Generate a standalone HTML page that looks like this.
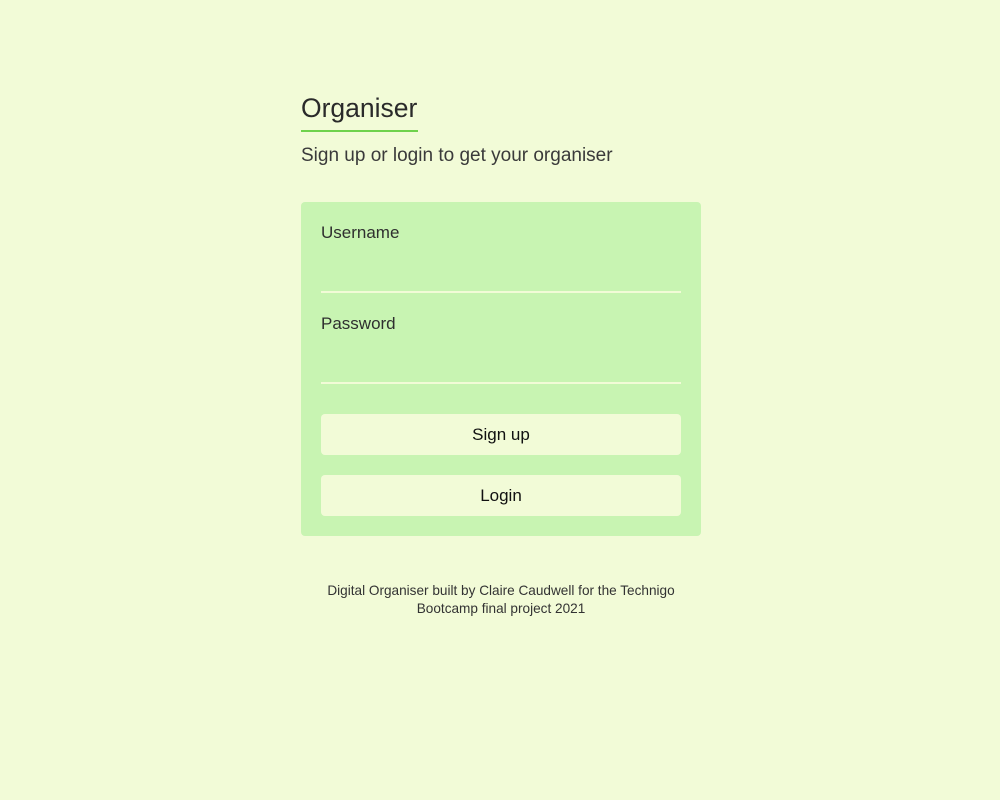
<!DOCTYPE html>
<html><head><style>
html,body{margin:0;padding:0;width:1000px;height:800px;background:#f2fbd7;font-family:"Liberation Sans",sans-serif;color:#2a2a2a}
.t{position:absolute;left:301px;top:93px;font-size:26.5px;line-height:30px;color:#2a2a2a}
.ul{position:absolute;left:301px;top:130px;width:117px;height:2px;background:#6fd24c}
.sub{position:absolute;left:301px;top:145px;font-size:19px;line-height:22px;color:#3a3a3a}
.card{position:absolute;left:301px;top:202px;width:400px;height:334px;background:#c8f4b2;border-radius:4px}
.lab{position:absolute;left:20px;font-size:17px;color:#2f2f2f}
.line{position:absolute;left:20px;width:360px;height:2px;background:#f2fbd7}
.btn{position:absolute;left:20px;width:360px;height:41px;background:#f2fbd7;border-radius:4px;text-align:center;line-height:41px;font-size:17px;color:#111}
.foot{position:absolute;left:281px;width:440px;top:582px;text-align:center;font-size:13.6px;line-height:18px;color:#333}
</style></head><body>
<div class="t">Organiser</div>
<div class="ul"></div>
<div class="sub">Sign up or login to get your organiser</div>
<div class="card">
<div class="lab" style="top:21px">Username</div>
<div class="line" style="top:89px"></div>
<div class="lab" style="top:112px">Password</div>
<div class="line" style="top:180px"></div>
<div class="btn" style="top:212px">Sign up</div>
<div class="btn" style="top:273px">Login</div>
</div>
<div class="foot">Digital Organiser built by Claire Caudwell for the Technigo<br>Bootcamp final project 2021</div>
</body></html>
